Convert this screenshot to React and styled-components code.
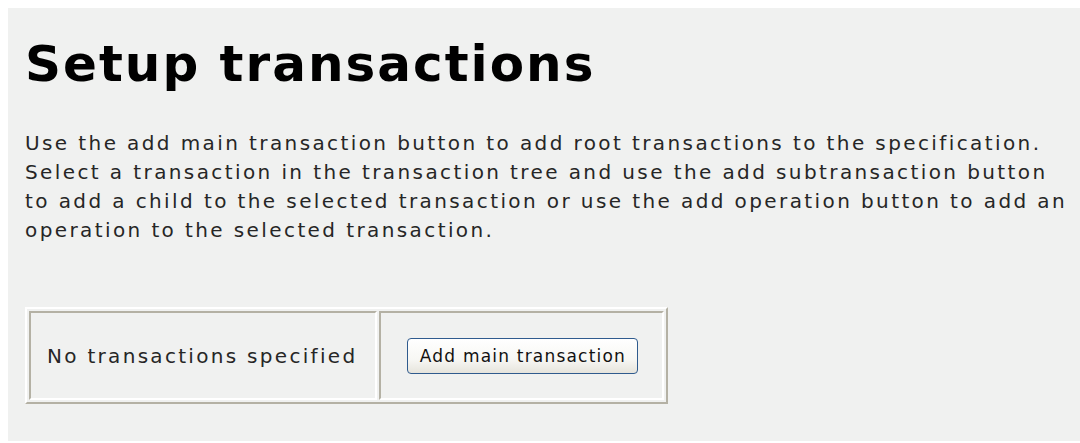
import styled, { createGlobalStyle } from "styled-components";

const GlobalStyle = createGlobalStyle`
  html, body {
    background: #ffffff;
  }
  body {
    margin: 8px 0 0 8px;
    font-family: "DejaVu Sans", Verdana, sans-serif;
  }
`;

const Page = styled.div`
  background: #f0f1f0;
  padding: 26px 0 37px 17px;
`;

const Title = styled.h1`
  margin: 0;
  font-size: 50px;
  line-height: 60px;
  font-weight: bold;
  letter-spacing: 2px;
  color: #000;
`;

const Intro = styled.p`
  margin: 35px 0 62px;
  max-width: 1050px;
  font-size: 20px;
  line-height: 29px;
  letter-spacing: 2.4px;
  color: #262626;
`;

// old-school table with raised outer frame and sunken cells
const Table = styled.table`
  border-collapse: separate;
  border-spacing: 2px;
  border: 2px solid;
  border-color: #ffffff #b4b1a4 #b4b1a4 #ffffff;
`;

const Cell = styled.td`
  height: 85px;
  padding: ${(p) => p.$pad};
  border: 2px solid;
  border-color: #b4b1a4 #ffffff #ffffff #b4b1a4;
  font-size: 20px;
  letter-spacing: 2.3px;
  color: #262626;
  vertical-align: middle;
  white-space: nowrap;
`;

const Button = styled.button`
  width: 231px;
  height: 36px;
  padding: 0 10px;
  border: 1px solid #2f5b8e;
  border-radius: 4px;
  background: linear-gradient(#ffffff 0%, #f7f7f4 60%, #e6e4dc 100%);
  font-family: "DejaVu Sans", Tahoma, sans-serif;
  font-size: 17px;
  letter-spacing: 1.2px;
  color: #111;
  cursor: pointer;
`;

export default function App() {
  return (
    <>
      <GlobalStyle />
      <Page>
        <Title>Setup transactions</Title>
        <Intro>
          Use the add main transaction button to add root transactions to the
          specification. Select a transaction in the transaction tree and use
          the add subtransaction button to add a child to the selected
          transaction or use the add operation button to add an operation to
          the selected transaction.
        </Intro>
        <Table>
          <tbody>
            <tr>
              <Cell $pad="0 18px 0 16px">No transactions specified</Cell>
              <Cell $pad="0 24px 0 26px">
                <Button>Add main transaction</Button>
              </Cell>
            </tr>
          </tbody>
        </Table>
      </Page>
    </>
  );
}
